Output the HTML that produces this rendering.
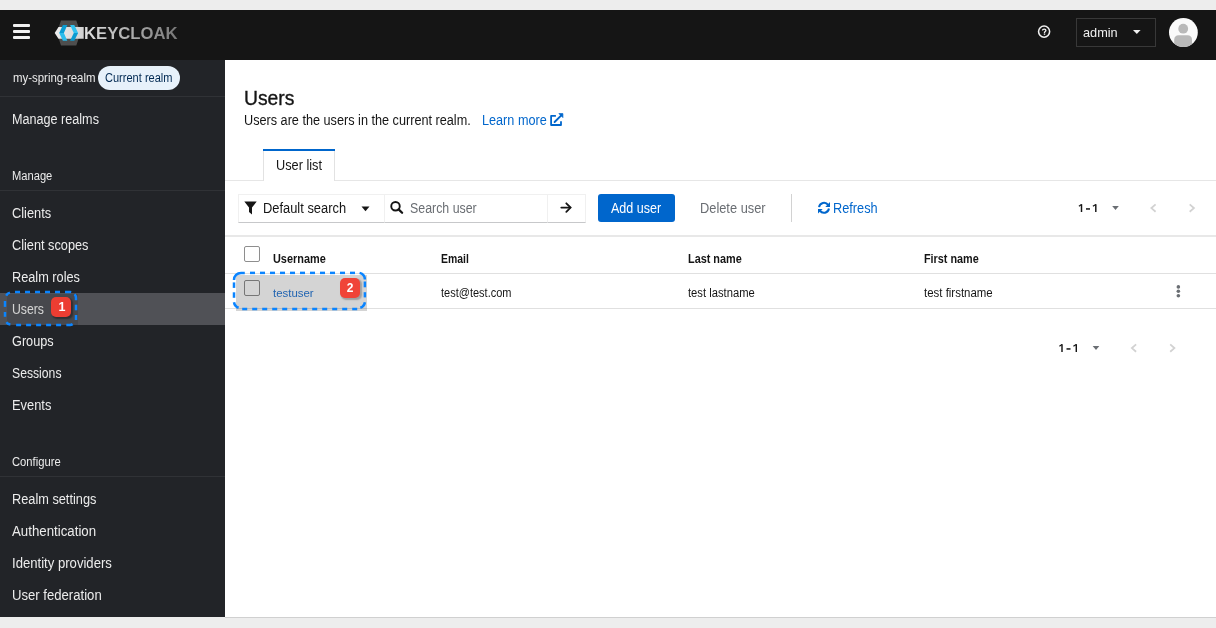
<!DOCTYPE html>
<html><head><meta charset="utf-8">
<style>
*{margin:0;padding:0;box-sizing:border-box}
html,body{width:1216px;height:628px;overflow:hidden;background:#ededed;font-family:"Liberation Sans",sans-serif;position:relative}
.a{position:absolute}
.tx{position:absolute;white-space:nowrap;transform-origin:0 0}

</style></head>
<body>
<div class="a" style="left:0;top:0;width:1216px;height:10px;background:#ededed"></div>
<div class="a" style="left:0;top:10px;width:1216px;height:50px;background:#151515"></div>
<div class="a" style="left:0;top:60px;width:225px;height:557px;background:#222428"></div>
<div class="a" style="left:225px;top:60px;width:991px;height:557px;background:#fff"></div>
<div class="a" style="left:0;top:617px;width:1216px;height:11px;background:#ededed"></div><div class="a" style="left:225px;top:617px;width:991px;height:1px;background:#d0d0d0"></div>
<!-- hamburger -->
<div class="a" style="left:13px;top:24px;width:17px;height:3px;background:#f0f0f0;border-radius:1px"></div>
<div class="a" style="left:13px;top:30px;width:17px;height:3px;background:#f0f0f0;border-radius:1px"></div>
<div class="a" style="left:13px;top:36px;width:17px;height:3px;background:#f0f0f0;border-radius:1px"></div>
<!-- logo -->
<svg class="a" style="left:50px;top:15px" width="50" height="35" viewBox="50 15 50 35">
  <defs><linearGradient id="bg1" x1="0" x2="1" y1="0" y2="0"><stop offset="0" stop-color="#eeeeee"/><stop offset="1" stop-color="#d2d2d2"/></linearGradient></defs>
  <polygon points="61,20.6 76.3,20.6 80.5,33 76.3,45.4 61,45.4 56.8,33" fill="#4e4e4e"/>
  <polygon points="54.7,33 58.5,26.9 83.7,26.9 83.7,38.8 58.5,38.8" fill="url(#bg1)"/>
  <polygon points="62.9,25 67.3,25 63.9,33 59.2,33" fill="#0b9dd3"/>
  <polygon points="59.2,33 63.9,33 67.3,40.8 62.9,40.8" fill="#2cbdec"/>
  <polygon points="70.1,25 74.3,25 78.1,33 73.8,33" fill="#30c2f0"/>
  <polygon points="73.8,33 78.1,33 74.3,40.8 70.1,40.8" fill="#0b9bd1"/>
</svg>
<div class="tx" style="left:84px;top:26px;font-size:16.9px;font-weight:bold;line-height:16.9px;transform:scaleX(0.988);background:linear-gradient(90deg,#e2e2e2,#777777);-webkit-background-clip:text;color:transparent">KEYCLOAK</div>
<!-- help -->
<svg class="a" style="left:1030px;top:20px" width="30" height="24" viewBox="1030 20 30 24">
  <circle cx="1044.1" cy="31.6" r="5.55" fill="none" stroke="#f0f0f0" stroke-width="1.55"/>
  <path d="M1042.5 30.6 C1042.5 29.6 1043.3 29.1 1044.2 29.1 C1045.2 29.1 1045.9 29.7 1045.9 30.5 C1045.9 31.5 1044.5 31.5 1044.5 32.6 V33.2" fill="none" stroke="#f0f0f0" stroke-width="1.35"/>
  <rect x="1043.8" y="33.6" width="1.4" height="1.2" fill="#f0f0f0"/>
</svg>
<!-- admin -->
<div class="a" style="left:1076px;top:18px;width:80px;height:29px;border:1px solid #383838"></div>
<svg class="a" style="left:1132px;top:29px" width="10" height="6" viewBox="0 0 10 6"><polygon points="1,1 8.6,1 4.8,5" fill="#f0f0f0"/></svg>
<!-- avatar -->
<svg class="a" style="left:1160px;top:12px" width="46" height="40" viewBox="1160 12 46 40">
  <defs><clipPath id="cc"><circle cx="1183.4" cy="32.5" r="14.4"/></clipPath></defs>
  <circle cx="1183.4" cy="32.5" r="14.4" fill="#fafafa"/>
  <g clip-path="url(#cc)">
    <circle cx="1183.2" cy="28.7" r="4.9" fill="#b9b9b9"/>
    <path d="M1174.2 48 V39.6 C1174.2 37 1176 35.3 1178.6 35.3 H1187.6 C1190.2 35.3 1192 37 1192 39.6 V48 Z" fill="#b9b9b9"/>
  </g>
</svg>
<!-- sidebar shapes -->
<div class="a" style="left:98px;top:66px;width:82px;height:24px;border-radius:12px;background:#e7f1fa"></div>
<div class="a" style="left:0;top:96px;width:225px;height:1px;background:#303236"></div>
<div class="a" style="left:0;top:190px;width:225px;height:1px;background:#303236"></div>
<div class="a" style="left:0;top:476px;width:225px;height:1px;background:#303236"></div>
<div class="a" style="left:0;top:293px;width:225px;height:32px;background:#505156"></div>
<!-- main: learn more icon -->
<svg class="a" style="left:545px;top:108px" width="25" height="22" viewBox="545 108 25 22">
  <path d="M555.9 115.9 H551.1 V125 H561 V121.3" fill="none" stroke="#0066cc" stroke-width="1.8" stroke-linejoin="round"/>
  <path d="M554.6 122 L561.3 115.3" fill="none" stroke="#0066cc" stroke-width="1.9" stroke-linecap="round"/>
  <polygon points="558.9,113.6 562.9,113.6 562.9,117.6" fill="#0066cc" stroke="#0066cc" stroke-width="0.7" stroke-linejoin="round"/>
</svg>
<!-- tabs -->
<div class="a" style="left:225px;top:180px;width:991px;height:1px;background:#e6e6e6"></div>
<div class="a" style="left:263px;top:149px;width:72px;height:32px;background:#fff;border-left:1px solid #e2e2e2;border-right:1px solid #e2e2e2"></div>
<div class="a" style="left:263px;top:149px;width:72px;height:2px;background:#0066cc"></div>
<!-- toolbar -->
<div class="a" style="left:238px;top:194px;width:147px;height:29px;border:1px solid #f0f0f0;border-bottom:1px solid #c7c8ca"></div>
<svg class="a" style="left:244px;top:201px" width="13" height="14" viewBox="0 0 13 14">
  <path d="M0.3 0.5 H12.7 L8 6.5 V13.5 L5 11 V6.5 Z" fill="#151515"/>
</svg>
<svg class="a" style="left:361px;top:206px" width="9" height="6" viewBox="0 0 9 6"><polygon points="0.5,0.5 8.5,0.5 4.5,5.2" fill="#151515"/></svg>
<div class="a" style="left:384px;top:194px;width:164px;height:29px;border:1px solid #f0f0f0;border-bottom:1px solid #c7c8ca"></div>
<div class="a" style="left:547px;top:194px;width:39px;height:29px;border:1px solid #f0f0f0;border-bottom:1px solid #c7c8ca"></div>
<svg class="a" style="left:385px;top:196px" width="25" height="24" viewBox="385 196 25 24">
  <circle cx="395.5" cy="206.3" r="4.25" fill="none" stroke="#151515" stroke-width="1.9"/>
  <path d="M398.6 209.4 L402.1 212.8" stroke="#151515" stroke-width="2.3" stroke-linecap="round"/>
</svg>
<svg class="a" style="left:552px;top:196px" width="28" height="24" viewBox="552 196 28 24">
  <path d="M561.3 207.6 H570" stroke="#151515" stroke-width="1.8" stroke-linecap="round"/>
  <path d="M566.3 203.3 L570.6 207.6 L566.3 211.9" fill="none" stroke="#151515" stroke-width="1.8" stroke-linecap="round" stroke-linejoin="miter"/>
</svg>
<div class="a" style="left:598px;top:194px;width:77px;height:28px;background:#0066cc;border-radius:3px"></div>
<div class="a" style="left:791px;top:194px;width:1px;height:28px;background:#d2d2d2"></div>
<svg class="a" style="left:812px;top:196px" width="28" height="24" viewBox="812 196 28 24">
  <path d="M819.05 207.10 A5.0 5.0 0 0 1 828.10 204.93" fill="none" stroke="#0066cc" stroke-width="2"/>
  <polygon points="825.3,206.9 830,206.9 830,202.1" fill="#0066cc"/>
  <path d="M828.95 208.50 A5.0 5.0 0 0 1 819.90 210.67" fill="none" stroke="#0066cc" stroke-width="2"/>
  <polygon points="822.7,208.9 818,208.9 818,213.4" fill="#0066cc"/>
</svg>
<svg class="a" style="left:0;top:0" width="1216" height="628" viewBox="0 0 1216 628">
<g>
  <path d="M1078.9 206.2 L1081.5 204.5" fill="none" stroke="#151515" stroke-width="1.2"/><path d="M1081.5 204.2 V212" fill="none" stroke="#151515" stroke-width="1.45"/>
  <rect x="1086" y="208.2" width="4" height="1.5" fill="#151515"/>
  <path d="M1092.9 206.2 L1095.8 204.5" fill="none" stroke="#151515" stroke-width="1.2"/><path d="M1095.8 204.2 V212" fill="none" stroke="#151515" stroke-width="1.45"/>
  <polygon points="1112.2,206.1 1118.8,206.1 1115.5,209.9" fill="#6a6e73"/>
  <path d="M1155.6 204.4 L1151.4 208.1 L1155.6 211.8" fill="none" stroke="#d2d2d2" stroke-width="1.8"/>
  <path d="M1189.7 204.4 L1193.9 208.1 L1189.7 211.8" fill="none" stroke="#d2d2d2" stroke-width="1.8"/>
</g>
<g transform="translate(-19.5,140)">
  <path d="M1078.9 206.2 L1081.5 204.5" fill="none" stroke="#151515" stroke-width="1.2"/><path d="M1081.5 204.2 V212" fill="none" stroke="#151515" stroke-width="1.45"/>
  <rect x="1086" y="208.2" width="4" height="1.5" fill="#151515"/>
  <path d="M1092.9 206.2 L1095.8 204.5" fill="none" stroke="#151515" stroke-width="1.2"/><path d="M1095.8 204.2 V212" fill="none" stroke="#151515" stroke-width="1.45"/>
  <polygon points="1112.2,206.1 1118.8,206.1 1115.5,209.9" fill="#6a6e73"/>
  <path d="M1155.6 204.4 L1151.4 208.1 L1155.6 211.8" fill="none" stroke="#d2d2d2" stroke-width="1.8"/>
  <path d="M1189.7 204.4 L1193.9 208.1 L1189.7 211.8" fill="none" stroke="#d2d2d2" stroke-width="1.8"/>
</g>
</svg>
<div class="a" style="left:225px;top:235px;width:991px;height:2px;background:#e8e8e8"></div>
<!-- table -->
<div class="a" style="left:244px;top:246px;width:16px;height:16px;border:1px solid #8e8e8e;border-radius:2px;background:#fff"></div>
<div class="a" style="left:225px;top:273px;width:991px;height:1px;background:#e0e0e0"></div>
<div class="a" style="left:244px;top:280px;width:16px;height:16px;border:1px solid #8e8e8e;border-radius:2px;background:#fff"></div>
<svg class="a" style="left:1168px;top:278px" width="22" height="26" viewBox="1168 278 22 26">
  <circle cx="1178.35" cy="286.9" r="1.8" fill="#6a6e73"/><circle cx="1178.35" cy="291.3" r="1.8" fill="#6a6e73"/><circle cx="1178.35" cy="295.7" r="1.8" fill="#6a6e73"/>
</svg>
<div class="a" style="left:225px;top:308px;width:991px;height:1px;background:#e0e0e0"></div>
<!-- bottom pagination -->

<div class="tx" style="left:12.70px;top:71.84px;font-size:12px;line-height:12px;font-weight:400;color:#ececec;transform:scaleX(0.952);">my-spring-realm</div>
<div class="tx" style="left:104.90px;top:71.84px;font-size:12px;line-height:12px;font-weight:400;color:#002952;transform:scaleX(0.92);">Current realm</div>
<div class="tx" style="left:11.60px;top:112.45px;font-size:14px;line-height:14px;font-weight:400;color:#ececec;transform:scaleX(0.901);">Manage realms</div>
<div class="tx" style="left:12.40px;top:169.84px;font-size:12px;line-height:12px;font-weight:400;color:#ececec;transform:scaleX(0.93);">Manage</div>
<div class="tx" style="left:12.30px;top:206.15px;font-size:14px;line-height:14px;font-weight:400;color:#ececec;transform:scaleX(0.916);">Clients</div>
<div class="tx" style="left:12.30px;top:238.15px;font-size:14px;line-height:14px;font-weight:400;color:#ececec;transform:scaleX(0.909);">Client scopes</div>
<div class="tx" style="left:11.60px;top:270.15px;font-size:14px;line-height:14px;font-weight:400;color:#ececec;transform:scaleX(0.91);">Realm roles</div>
<div class="tx" style="left:12.30px;top:302.15px;font-size:14px;line-height:14px;font-weight:400;color:#ececec;transform:scaleX(0.875);">Users</div>
<div class="tx" style="left:12.30px;top:334.15px;font-size:14px;line-height:14px;font-weight:400;color:#ececec;transform:scaleX(0.908);">Groups</div>
<div class="tx" style="left:12.30px;top:366.15px;font-size:14px;line-height:14px;font-weight:400;color:#ececec;transform:scaleX(0.871);">Sessions</div>
<div class="tx" style="left:11.60px;top:398.15px;font-size:14px;line-height:14px;font-weight:400;color:#ececec;transform:scaleX(0.919);">Events</div>
<div class="tx" style="left:12.10px;top:455.84px;font-size:12px;line-height:12px;font-weight:400;color:#ececec;transform:scaleX(0.936);">Configure</div>
<div class="tx" style="left:11.60px;top:492.15px;font-size:14px;line-height:14px;font-weight:400;color:#ececec;transform:scaleX(0.911);">Realm settings</div>
<div class="tx" style="left:12.30px;top:524.15px;font-size:14px;line-height:14px;font-weight:400;color:#ececec;transform:scaleX(0.948);">Authentication</div>
<div class="tx" style="left:11.60px;top:556.15px;font-size:14px;line-height:14px;font-weight:400;color:#ececec;transform:scaleX(0.937);">Identity providers</div>
<div class="tx" style="left:11.60px;top:588.15px;font-size:14px;line-height:14px;font-weight:400;color:#ececec;transform:scaleX(0.937);">User federation</div>
<div class="tx" style="left:1083.00px;top:25.63px;font-size:13.2px;line-height:13.2px;font-weight:400;color:#f0f0f0;transform:scaleX(0.965);">admin</div>
<div class="tx" style="left:243.80px;top:88.07px;font-size:20px;line-height:20px;font-weight:400;color:#151515;transform:scaleX(0.966);-webkit-text-stroke:0.35px #151515;">Users</div>
<div class="tx" style="left:244.10px;top:113.15px;font-size:14px;line-height:14px;font-weight:400;color:#151515;transform:scaleX(0.905);">Users are the users in the current realm.</div>
<div class="tx" style="left:481.50px;top:113.15px;font-size:14px;line-height:14px;font-weight:400;color:#0066cc;transform:scaleX(0.904);">Learn more</div>
<div class="tx" style="left:276.40px;top:157.85px;font-size:14px;line-height:14px;font-weight:400;color:#151515;transform:scaleX(0.91);">User list</div>
<div class="tx" style="left:263.40px;top:201.05px;font-size:14px;line-height:14px;font-weight:400;color:#151515;transform:scaleX(0.92);">Default search</div>
<div class="tx" style="left:409.90px;top:201.05px;font-size:14px;line-height:14px;font-weight:400;color:#6a6e73;transform:scaleX(0.884);">Search user</div>
<div class="tx" style="left:611.00px;top:201.05px;font-size:14px;line-height:14px;font-weight:400;color:#ffffff;transform:scaleX(0.896);">Add user</div>
<div class="tx" style="left:700.00px;top:201.05px;font-size:14px;line-height:14px;font-weight:400;color:#6a6e73;transform:scaleX(0.916);">Delete user</div>
<div class="tx" style="left:833.30px;top:201.05px;font-size:14px;line-height:14px;font-weight:400;color:#0066cc;transform:scaleX(0.91);">Refresh</div>
<div class="tx" style="left:273.20px;top:253.04px;font-size:12px;line-height:12px;font-weight:700;color:#151515;transform:scaleX(0.908);">Username</div>
<div class="tx" style="left:440.70px;top:253.04px;font-size:12px;line-height:12px;font-weight:700;color:#151515;transform:scaleX(0.868);">Email</div>
<div class="tx" style="left:688.00px;top:253.04px;font-size:12px;line-height:12px;font-weight:700;color:#151515;transform:scaleX(0.905);">Last name</div>
<div class="tx" style="left:924.00px;top:253.04px;font-size:12px;line-height:12px;font-weight:700;color:#151515;transform:scaleX(0.901);">First name</div>
<div class="tx" style="left:273.20px;top:286.88px;font-size:11.6px;line-height:11.6px;font-weight:400;color:#2979d6;transform:scaleX(0.985);">testuser</div>
<div class="tx" style="left:440.70px;top:286.54px;font-size:12px;line-height:12px;font-weight:400;color:#151515;transform:scaleX(0.917);">test@test.com</div>
<div class="tx" style="left:688.00px;top:286.54px;font-size:12px;line-height:12px;font-weight:400;color:#151515;transform:scaleX(0.935);">test lastname</div>
<div class="tx" style="left:924.00px;top:286.54px;font-size:12px;line-height:12px;font-weight:400;color:#151515;transform:scaleX(0.954);">test firstname</div>
<div class="a" style="left:7px;top:294px;width:71px;height:31px;background:rgba(0,0,0,0.1)"></div>
<div class="a" style="left:236px;top:275px;width:131px;height:36px;background:rgba(0,0,0,0.17)"></div>
<svg class="a" style="left:0;top:0" width="1216" height="628" viewBox="0 0 1216 628">
<path d="M250 272.9 H255" fill="none" stroke="#0a84ff" stroke-width="2.5"/>
<path d="M260 272.9 H265" fill="none" stroke="#0a84ff" stroke-width="2.5"/>
<path d="M270 272.9 H275" fill="none" stroke="#0a84ff" stroke-width="2.5"/>
<path d="M280 272.9 H285" fill="none" stroke="#0a84ff" stroke-width="2.5"/>
<path d="M290 272.9 H295" fill="none" stroke="#0a84ff" stroke-width="2.5"/>
<path d="M300 272.9 H305" fill="none" stroke="#0a84ff" stroke-width="2.5"/>
<path d="M310 272.9 H315" fill="none" stroke="#0a84ff" stroke-width="2.5"/>
<path d="M320 272.9 H325" fill="none" stroke="#0a84ff" stroke-width="2.5"/>
<path d="M330 272.9 H335" fill="none" stroke="#0a84ff" stroke-width="2.5"/>
<path d="M340 272.9 H345" fill="none" stroke="#0a84ff" stroke-width="2.5"/>
<path d="M350 272.9 H355" fill="none" stroke="#0a84ff" stroke-width="2.5"/>
<path d="M242.2 309 H247.2" fill="none" stroke="#0a84ff" stroke-width="2.5"/>
<path d="M252.2 309 H257.2" fill="none" stroke="#0a84ff" stroke-width="2.5"/>
<path d="M262.2 309 H267.2" fill="none" stroke="#0a84ff" stroke-width="2.5"/>
<path d="M272.2 309 H277.2" fill="none" stroke="#0a84ff" stroke-width="2.5"/>
<path d="M282.2 309 H287.2" fill="none" stroke="#0a84ff" stroke-width="2.5"/>
<path d="M292.2 309 H297.2" fill="none" stroke="#0a84ff" stroke-width="2.5"/>
<path d="M302.2 309 H307.2" fill="none" stroke="#0a84ff" stroke-width="2.5"/>
<path d="M312.2 309 H317.2" fill="none" stroke="#0a84ff" stroke-width="2.5"/>
<path d="M322.2 309 H327.2" fill="none" stroke="#0a84ff" stroke-width="2.5"/>
<path d="M332.2 309 H337.2" fill="none" stroke="#0a84ff" stroke-width="2.5"/>
<path d="M342.2 309 H347.2" fill="none" stroke="#0a84ff" stroke-width="2.5"/>
<path d="M352.2 309 H357.2" fill="none" stroke="#0a84ff" stroke-width="2.5"/>
<path d="M234 282.4 V287.9" fill="none" stroke="#0a84ff" stroke-width="2.5"/>
<path d="M234 292.3 V297.8" fill="none" stroke="#0a84ff" stroke-width="2.5"/>
<path d="M364.9 281.5 V287.3" fill="none" stroke="#0a84ff" stroke-width="2.5"/>
<path d="M364.9 292.2 V297.4" fill="none" stroke="#0a84ff" stroke-width="2.5"/>
<path d="M234 280 V279.9 A7 7 0 0 1 241 272.9 H244.8" fill="none" stroke="#0a84ff" stroke-width="2.5"/>
<path d="M359.6 272.9 A7 7 0 0 1 364.9 279.6" fill="none" stroke="#0a84ff" stroke-width="2.5"/>
<path d="M364.9 302.2 A7 7 0 0 1 360.3 307.8" fill="none" stroke="#0a84ff" stroke-width="2.5"/>
<path d="M234 302.2 A7 7 0 0 0 238.6 307.8" fill="none" stroke="#0a84ff" stroke-width="2.5"/>
<path d="M15 292 H20" fill="none" stroke="#0a84ff" stroke-width="2.5"/>
<path d="M25 292 H30" fill="none" stroke="#0a84ff" stroke-width="2.5"/>
<path d="M35 292 H40" fill="none" stroke="#0a84ff" stroke-width="2.5"/>
<path d="M45 292 H50" fill="none" stroke="#0a84ff" stroke-width="2.5"/>
<path d="M55 292 H60" fill="none" stroke="#0a84ff" stroke-width="2.5"/>
<path d="M65 292 H70 A6 6 0 0 1 71.2 292.12" fill="none" stroke="#0a84ff" stroke-width="2.5"/>
<path d="M16.1 325 H21.1" fill="none" stroke="#0a84ff" stroke-width="2.5"/>
<path d="M26.1 325 H31.1" fill="none" stroke="#0a84ff" stroke-width="2.5"/>
<path d="M36.1 325 H41.1" fill="none" stroke="#0a84ff" stroke-width="2.5"/>
<path d="M46.1 325 H51.1" fill="none" stroke="#0a84ff" stroke-width="2.5"/>
<path d="M56.1 325 H61.1" fill="none" stroke="#0a84ff" stroke-width="2.5"/>
<path d="M66.3 325 H70 A6 6 0 0 0 72.6 324.1" fill="none" stroke="#0a84ff" stroke-width="2.5"/>
<path d="M5 301 V306.9" fill="none" stroke="#0a84ff" stroke-width="2.5"/>
<path d="M5 312 V316.8" fill="none" stroke="#0a84ff" stroke-width="2.5"/>
<path d="M76 304.7 V310.3" fill="none" stroke="#0a84ff" stroke-width="2.5"/>
<path d="M76 315 V320" fill="none" stroke="#0a84ff" stroke-width="2.5"/>
<path d="M6.2 295.6 A6 6 0 0 1 9.9 292.6" fill="none" stroke="#0a84ff" stroke-width="2.5"/>
<path d="M6.4 322.2 A6 6 0 0 0 10.4 324.6" fill="none" stroke="#0a84ff" stroke-width="2.5"/>
<path d="M74.6 294.3 A6 6 0 0 1 76 298 V300.2" fill="none" stroke="#0a84ff" stroke-width="2.5"/>
</svg>
<div class="a" style="left:51.3px;top:297px;width:20px;height:20px;background:#ec3d32;border-radius:5px;box-shadow:1.5px 1.5px 1.5px rgba(0,0,0,0.35)"></div>
<div class="tx" style="left:56.5px;top:300px;width:10px;text-align:center;color:#fff;font-size:12.5px;line-height:14px;font-weight:bold;transform:scaleX(1.0001)">1</div>
<div class="a" style="left:340.3px;top:278.1px;width:19.7px;height:19.7px;background:#f04438;border-radius:5px;box-shadow:1.5px 1.5px 1.5px rgba(0,0,0,0.25)"></div>
<div class="tx" style="left:345px;top:281px;width:10px;text-align:center;color:#fff;font-size:12px;line-height:14px;font-weight:bold;transform:scaleX(1.0001)">2</div>

</body></html>
